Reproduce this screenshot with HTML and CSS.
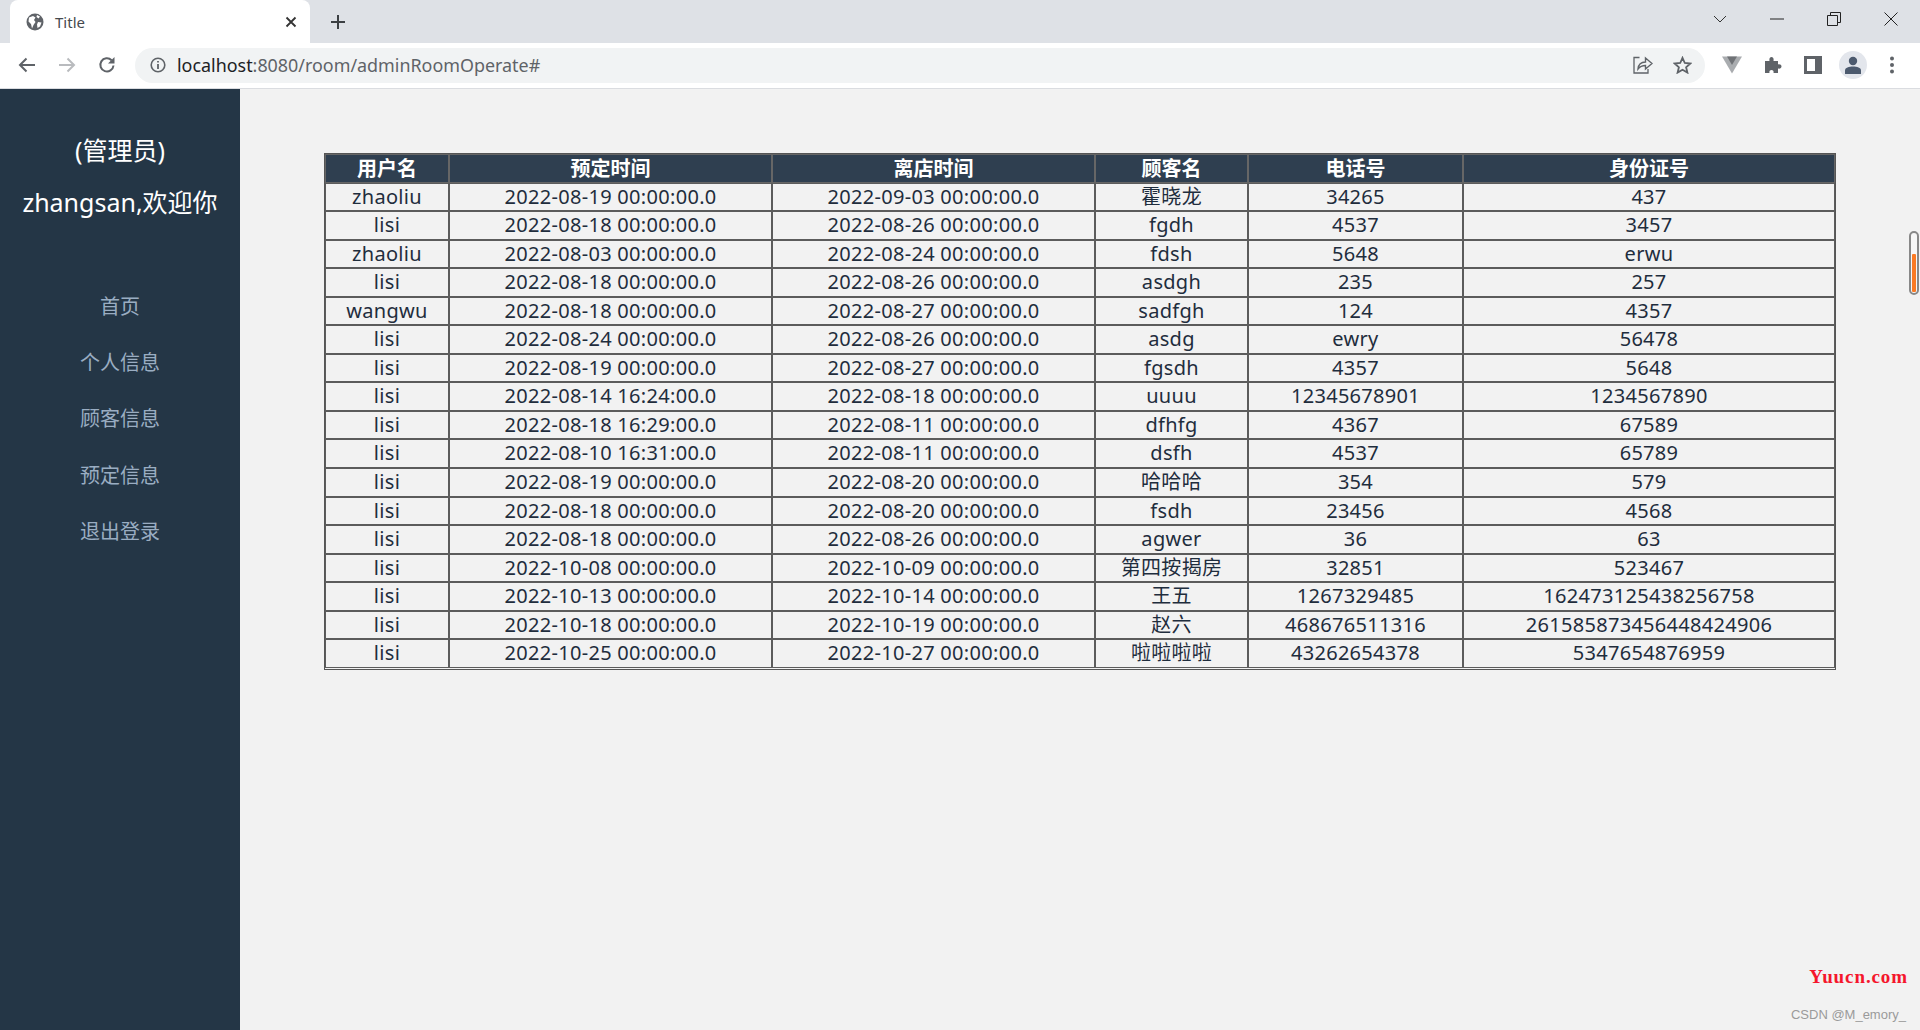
FILE: index.html
```html
<!DOCTYPE html>
<html lang="zh-CN">
<head>
    <meta charset="UTF-8">
    <title>Title</title>
    <link rel="stylesheet" href="styles.css">
</head>
<body>
    <div class="tabstrip">
        <div class="tab">
            <svg class="tab-icon" width="18" height="18" viewBox="0 0 18 18"><circle cx="9" cy="9" r="8.5" fill="#5f6368"/><path d="M3 4.5 L7 3 L9.5 4.5 L8 7 L9.5 9 L7.5 12 L6 15.5 L5 11 L2.5 8.5Z M12 9 L15.5 9.5 L14 13.5 L11.5 15 L11 11.5Z M11 2 L14 3.5 L12.5 5.5 L10.5 4Z" fill="#fff"/></svg>
            <span class="tab-title">Title</span>
            <svg class="tab-close" width="12" height="12" viewBox="0 0 12 12"><path d="M1.5 1.5 L10.5 10.5 M10.5 1.5 L1.5 10.5" stroke="#333" stroke-width="1.8"/></svg>
        </div>
        <svg class="new-tab" width="16" height="16" viewBox="0 0 16 16"><path d="M8 1 V15 M1 8 H15" stroke="#3c4043" stroke-width="2"/></svg>
        <div class="window-btns">
            <svg width="14" height="8" viewBox="0 0 14 8"><path d="M1 1 L7 7 L13 1" fill="none" stroke="#333" stroke-width="1"/></svg>
            <svg class="win-min" width="14" height="2" viewBox="0 0 14 2"><path d="M0 1 H14" stroke="#222" stroke-width="1"/></svg>
            <svg class="win-max" width="14" height="14" viewBox="0 0 14 14"><path d="M.5 3.5 H10.5 V13.5 H.5Z M3.5 3.5 V.5 H13.5 V10.5 H10.5" fill="none" stroke="#222" stroke-width="1"/></svg>
            <svg class="win-close" width="14" height="14" viewBox="0 0 14 14"><path d="M.5 .5 L13.5 13.5 M13.5 .5 L.5 13.5" stroke="#222" stroke-width="1"/></svg>
        </div>
    </div>

    <div class="toolbar">
        <svg class="nav-btn" width="18" height="16" viewBox="0 0 18 16"><path d="M17 8 H2 M8.5 1.5 L2 8 L8.5 14.5" fill="none" stroke="#5f6368" stroke-width="2"/></svg>
        <svg class="nav-btn" width="18" height="16" viewBox="0 0 18 16"><path d="M1 8 H16 M9.5 1.5 L16 8 L9.5 14.5" fill="none" stroke="#b9bbbe" stroke-width="2"/></svg>
        <svg class="nav-btn" width="18" height="18" viewBox="0 0 18 18"><path d="M15.5 9.5 A6.6 6.6 0 1 1 13.6 4.2" fill="none" stroke="#5f6368" stroke-width="2"/><path d="M16.5 1 V7.5 H10Z" fill="#5f6368"/></svg>
        <div class="omnibox">
            <svg class="info-icon" width="16" height="16" viewBox="0 0 16 16"><circle cx="8" cy="8" r="6.8" fill="none" stroke="#5f6368" stroke-width="1.6"/><path d="M8 7 V12 M8 4 V5.6" stroke="#5f6368" stroke-width="1.8"/></svg>
            <span class="url"><span class="url-host">localhost</span>:8080/room/adminRoomOperate#</span>
            <svg class="share-icon" width="20" height="18" viewBox="0 0 20 18"><path d="M6.5 1.5 H1 V17 H15 V13" fill="none" stroke="#5f6368" stroke-width="1.3"/><path d="M5 13 C5.5 8 9 6 12.5 6 V2 L19 7.5 L12.5 13 V9.5 C9.5 9.5 7 10.5 5 13Z" fill="none" stroke="#5f6368" stroke-width="1.4"/></svg>
            <svg class="star-icon" width="19" height="18" viewBox="0 0 19 18"><path d="M9.5 1.8 L11.8 7 L17.4 7.5 L13.1 11.2 L14.4 16.6 L9.5 13.8 L4.6 16.6 L5.9 11.2 L1.6 7.5 L7.2 7Z" fill="none" stroke="#5f6368" stroke-width="1.8"/></svg>
        </div>
        <div class="ext-icons">
            <svg width="20" height="18" viewBox="0 0 20 18"><path d="M0 .5 H20 L10 17.5Z" fill="#a9acaf"/><path d="M5 .5 H15 L10 9Z" fill="#6f7276"/></svg>
            <svg width="18" height="18" viewBox="0 0 18 18"><path d="M1 5 H5.5 C5 2.5 6 1 7.5 1 C9 1 10 2.5 9.5 5 H14 V8.5 C16 8 17.5 9 17.5 10.5 C17.5 12 16 13 14 12.5 V17 H9.5 C10 15 9 14 7.5 14 C6 14 5 15 5.5 17 H1Z" fill="#5f6368"/></svg>
            <svg width="18" height="18" viewBox="0 0 18 18"><rect width="18" height="18" fill="#5f6368"/><rect x="3" y="3" width="8" height="12" fill="#fff"/></svg>
            <div class="avatar"><svg width="18" height="18" viewBox="0 0 18 18"><circle cx="9" cy="5" r="4.2" fill="#4c5a6e"/><path d="M1 18 V14.5 C1 11.5 5 10.5 9 10.5 C13 10.5 17 11.5 17 14.5 V18Z" fill="#4c5a6e"/></svg></div>
            <svg width="6" height="18" viewBox="0 0 6 18"><circle cx="3" cy="2.5" r="2" fill="#5f6368"/><circle cx="3" cy="9" r="2" fill="#5f6368"/><circle cx="3" cy="15.5" r="2" fill="#5f6368"/></svg>
        </div>
    </div>

    <div class="page">
        <div class="sidebar">
            <div class="welcome">
                <p>(管理员)</p>
                <p>zhangsan,欢迎你</p>
            </div>
            <ul class="menu">
                <li><a href="#">首页</a></li>
                <li><a href="#">个人信息</a></li>
                <li><a href="#">顾客信息</a></li>
                <li><a href="#">预定信息</a></li>
                <li><a href="#">退出登录</a></li>
            </ul>
        </div>
        <div class="content">
            <table class="room-table">
                <colgroup>
                    <col class="col-user">
                    <col class="col-time">
                    <col class="col-time">
                    <col class="col-name">
                    <col class="col-phone">
                    <col class="col-id">
                </colgroup>
                <thead>
                    <tr><th>用户名</th><th>预定时间</th><th>离店时间</th><th>顾客名</th><th>电话号</th><th>身份证号</th></tr>
                </thead>
                <tbody>
                    <tr><td>zhaoliu</td><td>2022-08-19 00:00:00.0</td><td>2022-09-03 00:00:00.0</td><td>霍晓龙</td><td>34265</td><td>437</td></tr>
                    <tr><td>lisi</td><td>2022-08-18 00:00:00.0</td><td>2022-08-26 00:00:00.0</td><td>fgdh</td><td>4537</td><td>3457</td></tr>
                    <tr><td>zhaoliu</td><td>2022-08-03 00:00:00.0</td><td>2022-08-24 00:00:00.0</td><td>fdsh</td><td>5648</td><td>erwu</td></tr>
                    <tr><td>lisi</td><td>2022-08-18 00:00:00.0</td><td>2022-08-26 00:00:00.0</td><td>asdgh</td><td>235</td><td>257</td></tr>
                    <tr><td>wangwu</td><td>2022-08-18 00:00:00.0</td><td>2022-08-27 00:00:00.0</td><td>sadfgh</td><td>124</td><td>4357</td></tr>
                    <tr><td>lisi</td><td>2022-08-24 00:00:00.0</td><td>2022-08-26 00:00:00.0</td><td>asdg</td><td>ewry</td><td>56478</td></tr>
                    <tr><td>lisi</td><td>2022-08-19 00:00:00.0</td><td>2022-08-27 00:00:00.0</td><td>fgsdh</td><td>4357</td><td>5648</td></tr>
                    <tr><td>lisi</td><td>2022-08-14 16:24:00.0</td><td>2022-08-18 00:00:00.0</td><td>uuuu</td><td>12345678901</td><td>1234567890</td></tr>
                    <tr><td>lisi</td><td>2022-08-18 16:29:00.0</td><td>2022-08-11 00:00:00.0</td><td>dfhfg</td><td>4367</td><td>67589</td></tr>
                    <tr><td>lisi</td><td>2022-08-10 16:31:00.0</td><td>2022-08-11 00:00:00.0</td><td>dsfh</td><td>4537</td><td>65789</td></tr>
                    <tr><td>lisi</td><td>2022-08-19 00:00:00.0</td><td>2022-08-20 00:00:00.0</td><td>哈哈哈</td><td>354</td><td>579</td></tr>
                    <tr><td>lisi</td><td>2022-08-18 00:00:00.0</td><td>2022-08-20 00:00:00.0</td><td>fsdh</td><td>23456</td><td>4568</td></tr>
                    <tr><td>lisi</td><td>2022-08-18 00:00:00.0</td><td>2022-08-26 00:00:00.0</td><td>agwer</td><td>36</td><td>63</td></tr>
                    <tr><td>lisi</td><td>2022-10-08 00:00:00.0</td><td>2022-10-09 00:00:00.0</td><td>第四按揭房</td><td>32851</td><td>523467</td></tr>
                    <tr><td>lisi</td><td>2022-10-13 00:00:00.0</td><td>2022-10-14 00:00:00.0</td><td>王五</td><td>1267329485</td><td>162473125438256758</td></tr>
                    <tr><td>lisi</td><td>2022-10-18 00:00:00.0</td><td>2022-10-19 00:00:00.0</td><td>赵六</td><td>468676511316</td><td>261585873456448424906</td></tr>
                    <tr><td>lisi</td><td>2022-10-25 00:00:00.0</td><td>2022-10-27 00:00:00.0</td><td>啦啦啦啦</td><td>43262654378</td><td>5347654876959</td></tr>
                </tbody>
            </table>
            <div class="scroll-widget"><div class="scroll-fill"></div></div>
            <div class="watermark">
                <span class="wm-site">Yuucn.com</span>
                <span class="wm-author">CSDN @M_emory_</span>
            </div>
        </div>
    </div>
</body>
</html>
```

FILE: styles.css
```css
* {
    box-sizing: border-box;
}
html, body {
    height: 100%;
}
body {
    margin: 0;
    display: flex;
    flex-direction: column;
    overflow: hidden;
    font-family: "Noto Sans", "Noto Sans CJK SC", sans-serif;
    background-color: #f2f2f2;
}
.tabstrip {
    height: 43px;
    display: flex;
    align-items: flex-end;
    background-color: #dee1e6;
    padding-left: 10px;
}
.tab {
    width: 300px;
    height: 43px;
    display: flex;
    align-items: center;
    padding: 0 13px 0 16px;
    background-color: #fff;
    border-radius: 8px 8px 0 0;
}
.tab-icon {
    margin-right: 11px;
}
.tab-title {
    flex: 1;
    font-size: 15px;
    color: #45494e;
}
.new-tab {
    margin: 0 0 13px 20px;
}
.window-btns {
    margin-left: auto;
    height: 43px;
    display: flex;
    align-items: center;
    padding-bottom: 6px;
}
.window-btns svg {
    margin-right: 43px;
}
.window-btns .win-close {
    margin-right: 22px;
}
.toolbar {
    height: 46px;
    display: flex;
    align-items: center;
    background-color: #fff;
    border-bottom: 1px solid #dadce0;
    padding: 0 0 1px 18px;
}
.nav-btn {
    margin-right: 22px;
}
.omnibox {
    width: 1570px;
    height: 35px;
    margin-left: -3px;
    display: flex;
    align-items: center;
    padding: 0 13px 0 15px;
    background-color: #f1f3f4;
    border-radius: 18px;
}
.info-icon {
    margin-right: 11px;
}
.url {
    flex: 1;
    font-size: 17.9px;
    color: #5f6368;
}
.url-host {
    color: #202124;
}
.share-icon {
    margin-right: 20px;
}
.ext-icons {
    display: flex;
    align-items: center;
    gap: 22px;
    margin-left: 17px;
}
.avatar {
    width: 28px;
    height: 28px;
    margin: 0 0 0 -5px;
    display: flex;
    align-items: flex-end;
    justify-content: center;
    padding-bottom: 5px;
    border-radius: 50%;
    background-color: #e3e6ec;
}
.page {
    flex: 1;
    display: flex;
    min-height: 0;
}
.sidebar {
    width: 240px;
    background-color: #243646;
    text-align: center;
}
.welcome {
    padding-top: 35px;
    color: #fff;
    font-size: 25px;
    line-height: 52px;
}
.welcome p {
    margin: 0;
}
.menu {
    list-style: none;
    margin: 51px 0 0;
    padding: 0;
    font-size: 20px;
    line-height: 56.2px;
}
.menu a {
    color: #9aadc2;
    text-decoration: none;
}
.content {
    flex: 1;
    position: relative;
    padding: 64px 0 0 84px;
}
.room-table {
    width: 1512px;
    table-layout: fixed;
    border-collapse: separate;
    border-spacing: 0;
    border: 1px solid #555;
    padding-bottom: 1px;
    font-size: 20px;
    letter-spacing: .3px;
    color: #1f2d3d;
    text-align: center;
}
.col-user {
    width: 124px;
}
.col-time {
    width: 323px;
}
.col-name {
    width: 153px;
}
.col-phone {
    width: 215px;
}
.col-id {
    width: 372px;
}
.room-table th, .room-table td {
    padding: 0;
    border: 1px solid #5c5c5c;
    line-height: 26.55px;
    white-space: nowrap;
}
.room-table th {
    padding-top: 1px;
    background-color: #2f3f50;
    color: #fff;
    font-weight: bold;
    letter-spacing: 0;
    line-height: 25.55px;
    border-color: #666;
}
.scroll-widget {
    position: absolute;
    top: 142px;
    right: 1px;
    width: 10px;
    height: 64px;
    border: 2px solid #888;
    border-radius: 5px;
    background-color: #f7f7f7;
    padding: 1px;
    display: flex;
    align-items: flex-end;
}
.scroll-fill {
    width: 100%;
    height: 38px;
    background-color: #fb7a24;
    border-radius: 1px;
}
.watermark {
    position: absolute;
    right: 12px;
    bottom: 8px;
    display: flex;
    flex-direction: column;
    align-items: flex-end;
}
.wm-site {
    font-family: "Liberation Serif", serif;
    font-size: 19px;
    font-weight: bold;
    color: #f5162c;
    margin: 0 0 19px;
    letter-spacing: .9px;
}
.wm-author {
    font-family: "Liberation Sans", sans-serif;
    font-size: 13px;
    margin-right: 2px;
    color: #9a9a9a;
}
```
